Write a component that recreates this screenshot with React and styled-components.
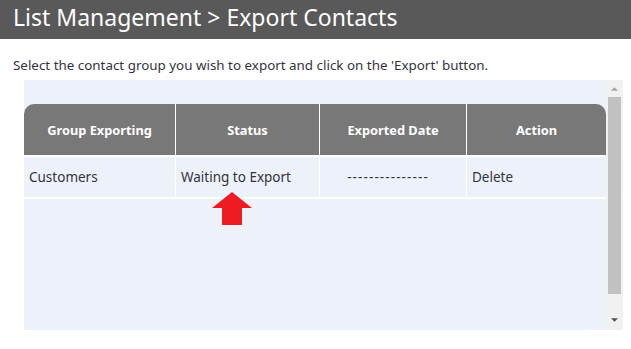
import styled, { createGlobalStyle } from "styled-components";

const GlobalStyle = createGlobalStyle`
  body {
    margin: 0;
    background: #ffffff;
    font-family: "Noto Sans", "Open Sans", sans-serif;
  }
`;

const rows = [
  { group: "Customers", status: "Waiting to Export", date: "---------------", action: "Delete" },
];

const App = () => {
  return (
    <>
      <GlobalStyle />
      <Page>
        <TitleBar>List Management &gt; Export Contacts</TitleBar>
        <Intro>Select the contact group you wish to export and click on the 'Export' button.</Intro>
        <Panel>
          <PanelContent>
            <Table>
              <thead>
                <tr>
                  <Th $w={151}>Group Exporting</Th>
                  <Th $w={144}>Status</Th>
                  <Th $w={147}>Exported Date</Th>
                  <Th>Action</Th>
                </tr>
              </thead>
              <tbody>
                {rows.map((r) => (
                  <tr key={r.group}>
                    <Td>{r.group}</Td>
                    <Td>
                      {r.status}
                      <Arrow viewBox="0 0 40 33">
                        <path d="M20 0 L40 16 L30 16 L30 33 L10 33 L10 16 L0 16 Z" fill="#ed1c24" />
                      </Arrow>
                    </Td>
                    <Td $center>
                      <Dashes>{r.date}</Dashes>
                    </Td>
                    <Td>{r.action}</Td>
                  </tr>
                ))}
              </tbody>
            </Table>
          </PanelContent>
          <ScrollBar>
            <ScrollArrow viewBox="0 0 8 4">
              <path d="M0 4 L4 0 L8 4 Z" fill="#a3a3a3" />
            </ScrollArrow>
            <Thumb />
            <ScrollArrow viewBox="0 0 8 4">
              <path d="M0 0 L8 0 L4 4 Z" fill="#505050" />
            </ScrollArrow>
          </ScrollBar>
        </Panel>
      </Page>
    </>
  );
};

export default App;

const Page = styled.div`
  width: 631px;
  height: 349px;
  overflow: hidden;
`;

const TitleBar = styled.h1`
  margin: 0;
  height: 39px;
  background: #595959;
  color: #ffffff;
  font-size: 23px;
  font-weight: 400;
  line-height: 34px;
  padding-left: 13px;
  white-space: nowrap;
`;

const Intro = styled.p`
  margin: 17px 0 0 13px;
  font-size: 13.4px;
  line-height: 18px;
  color: #333340;
  white-space: nowrap;
`;

const Panel = styled.div`
  margin: 6px 0 0 24px;
  width: 599px;
  height: 250px;
  display: flex;
  background: #edf2fa;
`;

const PanelContent = styled.div`
  flex: 1;
  padding-top: 24px;
`;

const ScrollBar = styled.div`
  width: 17px;
  background: #f1f1f1;
  display: flex;
  flex-direction: column;
  align-items: center;
  padding: 7px 0 8px;
`;

const ScrollArrow = styled.svg`
  width: 7px;
  height: 4px;
  flex: none;
`;

const Thumb = styled.div`
  width: 13px;
  height: 197px;
  margin: 6px 0 auto;
  background: #c1c1c1;
`;

const Table = styled.table`
  width: 582px;
  border-collapse: separate;
  border-spacing: 0;
  table-layout: fixed;
`;

const Th = styled.th`
  width: ${(p) => (p.$w ? `${p.$w}px` : "auto")};
  height: 53px;
  background: #787878;
  color: #ffffff;
  font-size: 12.8px;
  font-weight: 700;
  text-align: center;
  border-left: 1px solid #ffffff;
  border-bottom: 2px solid #ffffff;
  padding: 0;
  box-sizing: border-box;
  &:first-child {
    border-left: none;
    border-top-left-radius: 10px;
  }
  &:last-child {
    border-top-right-radius: 10px;
  }
`;

const Td = styled.td`
  position: relative;
  height: 40px;
  padding: 0 5px;
  font-size: 13.5px;
  color: #333340;
  text-align: ${(p) => (p.$center ? "center" : "left")};
  border-left: 1px solid #ffffff;
  border-bottom: 2px solid #ffffff;
  &:first-child {
    border-left: none;
  }
`;

const Dashes = styled.span`
  letter-spacing: 1.1px;
  margin-right: 10px;
`;

const Arrow = styled.svg`
  position: absolute;
  left: 36px;
  top: 35px;
  width: 40px;
  height: 33px;
`;
